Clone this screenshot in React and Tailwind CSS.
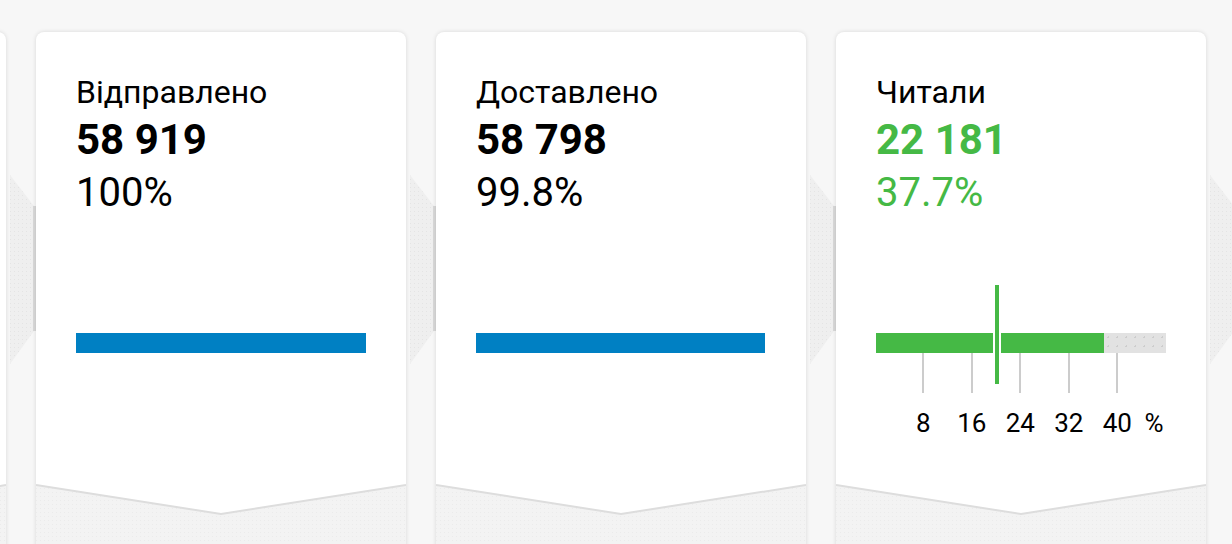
import React from 'react'

const cards = [
  { label: '', value: '', pct: '', empty: true },
  { label: 'Відправлено', value: '58 919', pct: '100%', bar: 100 },
  { label: 'Доставлено', value: '58 798', pct: '99.8%', bar: 99.8 },
  { label: 'Читали', value: '22 181', pct: '37.7%', green: true, chart: true },
]

const ticks = ['8', '16', '24', '32', '40']

// funnel arrow sitting in the gap between two cards
const Connector = () => (
  <div className="w-[30px] shrink-0 h-[512px]">
    <svg width="30" height="190" viewBox="0 0 30 190" className="block mt-[143px]">
      <defs>
        <pattern id="dots" width="4" height="4" patternUnits="userSpaceOnUse">
          <rect width="4" height="4" fill="#efefef" />
          <rect width="1" height="1" fill="#e4e4e4" />
        </pattern>
      </defs>
      <polygon points="4,0 28,31 28,156 4,189" fill="url(#dots)" />
      <line x1="28.5" y1="31" x2="28.5" y2="156" stroke="#d9d9d9" strokeWidth="3" />
    </svg>
  </div>
)

const ReadChart = () => (
  <div className="relative pt-[48px]">
    <div className="flex h-[20px]">
      <div className="w-[117px] bg-[#45b945]" />
      <div className="w-[8px] bg-white" />
      <div className="w-[103px] bg-[#45b945]" />
      <div className="flex-1 bg-[#e2e2e2] bg-[radial-gradient(#cdcdcd_1px,transparent_1px)] bg-[length:9px_9px]" />
    </div>
    {/* marker for the average, over the bar */}
    <div className="absolute top-0 left-[119px] h-[99px] w-[4px] bg-[#45b945]" />
    <div className="flex h-[40px] pl-[46px] gap-[46.5px]">
      {ticks.map(t => <div key={t} className="w-[2px] bg-[#cccccc]" />)}
    </div>
    <div className="flex mt-[14px] pl-[23px] text-[26px] leading-[32px] text-black">
      {ticks.map(t => <div key={t} className="w-[48.5px] text-center">{t}</div>)}
      <div className="ml-[3px]">%</div>
    </div>
  </div>
)

const Card = ({ card }) => {
  const color = card.green ? 'text-[#45b945]' : 'text-black'
  return (
    <div className="w-[370px] shrink-0 h-[560px] bg-white rounded-lg shadow-[0_0_4px_rgba(0,0,0,0.13)] flex flex-col overflow-hidden">
      <div className="px-10 pt-10">
        <div className="text-[32px] leading-[40px] h-[42px] text-black">{card.label}</div>
        <div className={`text-[42px] leading-[52px] h-[52px] font-bold ${color}`}>{card.value}</div>
        <div className={`text-[40px] leading-[54px] h-[54px] ${color}`}>{card.pct}</div>
        <div className="mt-[65px]">
          {card.chart ? (
            <ReadChart />
          ) : card.empty ? null : (
            <div className="pt-[48px]">
              <div className="h-[20px]">
                <div className="h-full bg-[#0080c3]" style={{ width: `${card.bar}%` }} />
              </div>
            </div>
          )}
        </div>
      </div>
      <svg width="370" height="108" viewBox="0 0 370 108" className="block mt-auto">
        <defs>
          <pattern id="bottomDots" width="4" height="4" patternUnits="userSpaceOnUse">
            <rect width="4" height="4" fill="#f3f3f3" />
            <rect width="1" height="1" fill="#ebebeb" />
          </pattern>
        </defs>
        <polygon points="0,1 185,30 370,1 370,108 0,108" fill="url(#bottomDots)" />
        <polyline points="0,1 185,30 370,1" fill="none" stroke="#dddddd" strokeWidth="2" />
      </svg>
    </div>
  )
}

export default function App() {
  return (
    <div className="w-[1232px] h-[544px] overflow-hidden bg-[#f7f7f7] font-[Roboto,sans-serif]">
      <div className="flex pt-[32px] -ml-[364px]">
        {cards.map((c, i) => (
          <React.Fragment key={i}>
            <Card card={c} />
            <Connector />
          </React.Fragment>
        ))}
      </div>
    </div>
  )
}
